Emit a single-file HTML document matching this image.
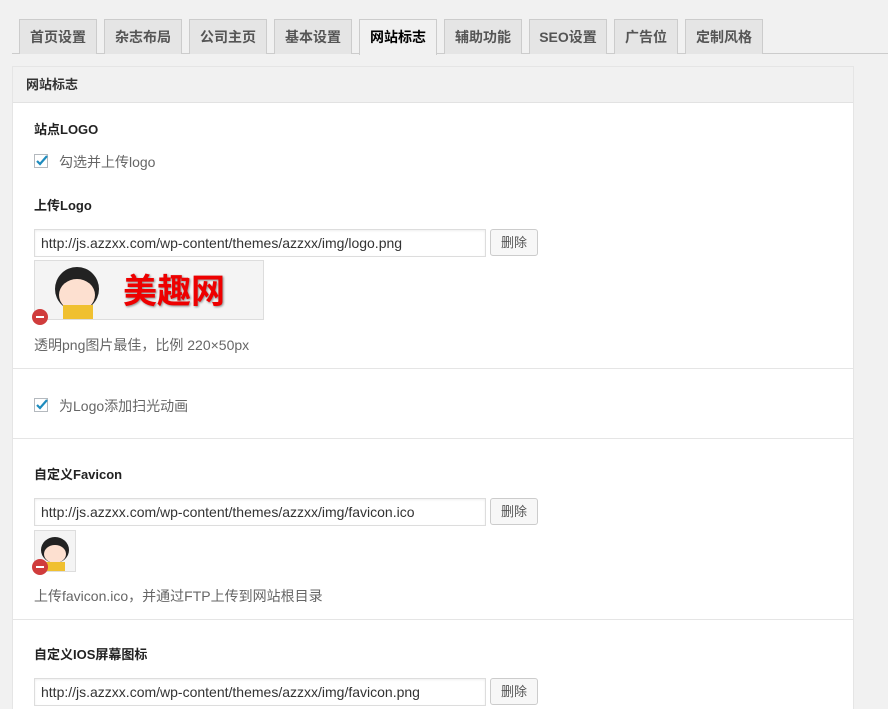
<!DOCTYPE html><html style="height:709px;overflow:hidden"><head><meta charset="utf-8"><style>
body{margin:0;background:#f1f1f1;font-family:"Liberation Sans","Noto Sans CJK SC",sans-serif;font-size:14px;color:#444;width:888px;height:709px;overflow:hidden;position:relative}
.a{position:absolute}
.tab{position:absolute;top:19px;border:1px solid #ccc;border-bottom:none;background:#e5e5e5;font-weight:bold;font-size:14px;line-height:34px;text-align:center;color:#555;box-sizing:border-box;height:35px}
.tab.on{background:#f1f1f1;color:#000;height:36px}
.panel{position:absolute;left:12px;top:66px;width:842px;height:643px;background:#fff;border:1px solid #e5e5e5;border-bottom:none;box-sizing:border-box;overflow:hidden}
.hd{position:absolute;left:0;top:0;right:0;height:35px;background:#f1f1f1;border-bottom:1px solid #e2e2e2;font-weight:bold;font-size:13px;line-height:36px;padding-left:13px;color:#333}
.lbl{position:absolute;left:21px;font-weight:bold;font-size:13px;color:#222}
.cb{position:absolute;left:21px;width:14px;height:14px;border:1px solid #b4b9be;box-sizing:border-box;background:#fff}
.cb svg{position:absolute;left:-1px;top:-2px}
.ct{position:absolute;left:46px;font-size:14px;color:#666}
.in{position:absolute;left:21px;width:452px;height:28px;border:1px solid #ddd;box-sizing:border-box;font-size:14px;line-height:26px;padding-left:6px;color:#333;box-shadow:inset 0 1px 2px rgba(0,0,0,.07)}
.bt{position:absolute;left:477px;width:48px;height:27px;border:1px solid #ccc;border-radius:3px;background:#f7f7f7;box-sizing:border-box;font-size:13px;line-height:25px;text-align:center;color:#555}
.sep{position:absolute;left:0;right:0;height:1px;background:#e5e5e5}
.ds{position:absolute;left:21px;font-size:14px;color:#666}
.rm{position:absolute;width:16px;height:16px;border-radius:50%;background:#d03c3c}
.rm:after{content:"";position:absolute;left:4px;top:7px;width:8px;height:2px;background:#fff}
</style></head><body>
<div class="a" style="left:12px;top:53px;width:876px;height:1px;background:#ccc"></div>
<div class="tab" style="left:19px;width:78px">首页设置</div>
<div class="tab" style="left:104px;width:78px">杂志布局</div>
<div class="tab" style="left:189px;width:78px">公司主页</div>
<div class="tab" style="left:274px;width:78px">基本设置</div>
<div class="tab on" style="left:359px;width:78px">网站标志</div>
<div class="tab" style="left:444px;width:78px">辅助功能</div>
<div class="tab" style="left:529px;width:78px">SEO设置</div>
<div class="tab" style="left:614px;width:64px">广告位</div>
<div class="tab" style="left:685px;width:78px">定制风格</div>
<div class="panel">
<div class="hd">网站标志</div>
<div class="lbl" style="top:52px">站点LOGO</div>
<div class="cb" style="top:87px"><svg width="16" height="16" viewBox="0 0 16 16"><path d="M3 8l3 3 7-8" stroke="#1e8cbe" stroke-width="2.2" fill="none"/></svg></div>
<div class="ct" style="top:85px">勾选并上传logo</div>
<div class="lbl" style="top:128px">上传Logo</div>
<div class="in" style="top:162px">http://js.azzxx.com/wp-content/themes/azzxx/img/logo.png</div>
<div class="bt" style="top:162px">删除</div>
<div class="a" style="left:21px;top:193px;width:230px;height:60px;border:1px solid #ddd;box-sizing:border-box;background:#f4f4f4;overflow:hidden">
<div class="a" style="left:20px;top:6px;width:44px;height:44px;border-radius:50%;background:#222"></div>
<div class="a" style="left:24px;top:18px;width:36px;height:32px;border-radius:50%;background:#fde0d0"></div>
<div class="a" style="left:28px;top:44px;width:30px;height:14px;background:#f0c030"></div>
<div class="a" style="left:88px;top:8px;font-size:34px;font-weight:bold;color:#e00;font-family:'Noto Sans CJK SC',sans-serif;line-height:40px;text-shadow:1px 1px 2px #888">美趣网</div>
</div>
<div class="rm" style="left:19px;top:242px"></div>
<div class="ds" style="top:268px">透明png图片最佳，比例 220×50px</div>
<div class="sep" style="top:301px"></div>
<div class="cb" style="top:331px"><svg width="16" height="16" viewBox="0 0 16 16"><path d="M3 8l3 3 7-8" stroke="#1e8cbe" stroke-width="2.2" fill="none"/></svg></div>
<div class="ct" style="top:329px">为Logo添加扫光动画</div>
<div class="sep" style="top:371px"></div>
<div class="lbl" style="top:397px">自定义Favicon</div>
<div class="in" style="top:431px">http://js.azzxx.com/wp-content/themes/azzxx/img/favicon.ico</div>
<div class="bt" style="top:431px">删除</div>
<div class="a" style="left:21px;top:463px;width:42px;height:42px;border:1px solid #ddd;box-sizing:border-box;background:#f4f4f4;overflow:hidden">
<div class="a" style="left:6px;top:6px;width:28px;height:26px;border-radius:50%;background:#222"></div>
<div class="a" style="left:9px;top:14px;width:22px;height:18px;border-radius:50%;background:#fde0d0"></div>
<div class="a" style="left:10px;top:31px;width:20px;height:9px;background:#f0c030"></div>
</div>
<div class="rm" style="left:19px;top:492px"></div>
<div class="ds" style="top:519px">上传favicon.ico，并通过FTP上传到网站根目录</div>
<div class="sep" style="top:552px"></div>
<div class="lbl" style="top:577px">自定义IOS屏幕图标</div>
<div class="in" style="top:611px">http://js.azzxx.com/wp-content/themes/azzxx/img/favicon.png</div>
<div class="bt" style="top:611px">删除</div>
</div>
</body></html>
